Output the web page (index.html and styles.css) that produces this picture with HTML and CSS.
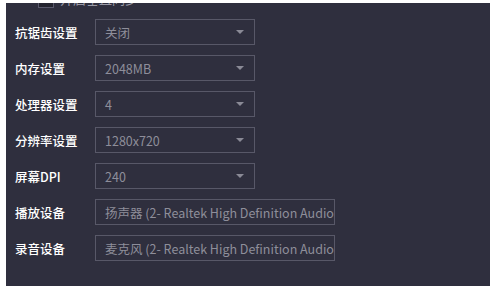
FILE: index.html
```html
<!DOCTYPE html>
<html lang="zh-CN">
<head>
    <meta charset="UTF-8">
    <title>设置</title>
    <link rel="stylesheet" href="styles.css">
</head>
<body>
    <div class="panel">
        <div class="check-row">
            <span class="checkbox"></span>
            <span class="check-label">开启垂直同步</span>
        </div>

        <div class="row">
            <label class="label">抗锯齿设置</label>
            <div class="select"><span>关闭</span><i class="arrow"></i></div>
        </div>
        <div class="row">
            <label class="label">内存设置</label>
            <div class="select"><span>2048MB</span><i class="arrow"></i></div>
        </div>
        <div class="row">
            <label class="label">处理器设置</label>
            <div class="select"><span>4</span><i class="arrow"></i></div>
        </div>
        <div class="row">
            <label class="label">分辨率设置</label>
            <div class="select"><span>1280x720</span><i class="arrow"></i></div>
        </div>
        <div class="row">
            <label class="label">屏幕DPI</label>
            <div class="select"><span>240</span><i class="arrow"></i></div>
        </div>
        <div class="row">
            <label class="label">播放设备</label>
            <div class="input"><span>扬声器 (2- Realtek High Definition Audio)</span></div>
        </div>
        <div class="row">
            <label class="label">录音设备</label>
            <div class="input"><span>麦克风 (2- Realtek High Definition Audio)</span></div>
        </div>
    </div>
</body>
</html>
```

FILE: styles.css
```css
* {
    margin: 0;
    padding: 0;
    box-sizing: border-box;
}

body {
    background: #ffffff;
    font-family: "Noto Sans CJK SC", "Noto Sans", sans-serif;
    height: 286px;
    overflow: hidden;
    padding: 3px 5px 0 6px;
}

.panel {
    background: #2f2f3e;
    height: 283px;
    overflow: hidden;
    padding-left: 9px;
}

.check-row {
    display: flex;
    align-items: center;
    height: 16px;
    margin-top: -11px;
    margin-bottom: 11px;
}

.checkbox {
    width: 16px;
    height: 16px;
    margin-left: 23px;
    border: 1px solid #5a5a6c;
    background: #24242f;
}

.check-label {
    margin-left: 6px;
    margin-top: -3px;
    font-size: 13px;
    color: #9a9aa6;
}

.row {
    display: flex;
    align-items: center;
    height: 26px;
    margin-bottom: 10px;
}

.label {
    width: 80px;
    font-size: 12.5px;
    font-weight: 500;
    color: #ffffff;
}

.select,
.input {
    height: 26px;
    border: 1px solid #585868;
    display: flex;
    align-items: center;
    padding-left: 9px;
    font-size: 12.5px;
    color: #8e8e9a;
    overflow: hidden;
    white-space: nowrap;
}

.select {
    width: 160px;
    justify-content: space-between;
    padding-right: 10px;
}

.input {
    width: 240px;
}

.arrow {
    width: 0;
    height: 0;
    border-left: 4px solid transparent;
    border-right: 4px solid transparent;
    border-top: 4px solid #8a8a96;
}
```
